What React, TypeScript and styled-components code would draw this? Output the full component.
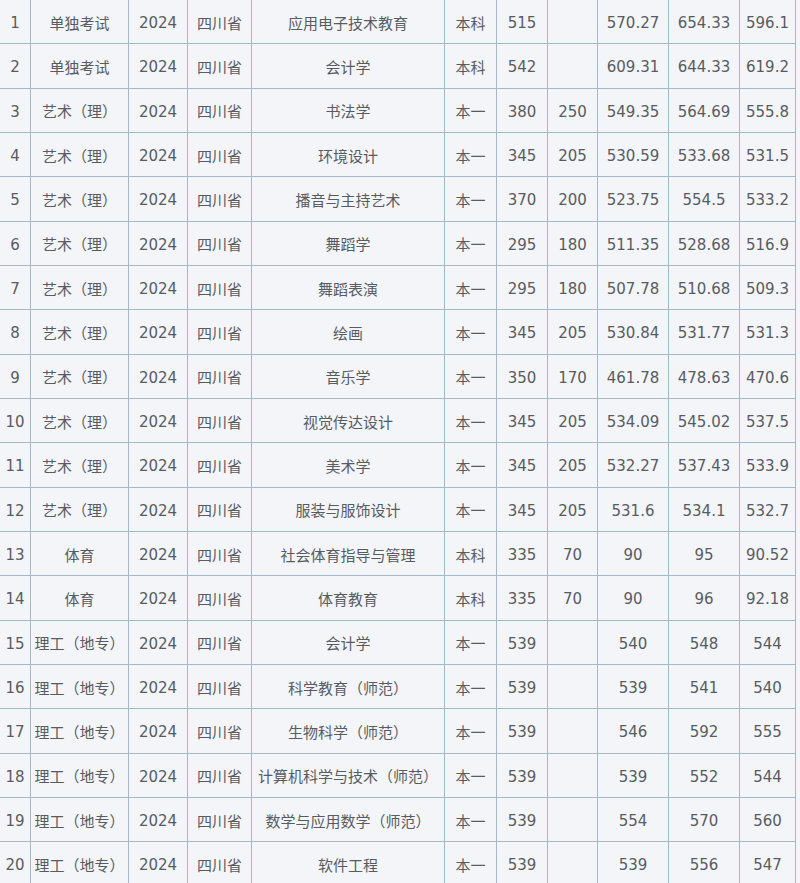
import React, { FC } from 'react';
import styled, { createGlobalStyle } from 'styled-components';

interface Row {
  category: string;
  major: string;
  level: string;
  score: string;
  extra: string;
  min: string;
  max: string;
  avg: string;
}

const rows: Row[] = [
  { category: '单独考试', major: '应用电子技术教育', level: '本科', score: '515', extra: '', min: '570.27', max: '654.33', avg: '596.1' },
  { category: '单独考试', major: '会计学', level: '本科', score: '542', extra: '', min: '609.31', max: '644.33', avg: '619.2' },
  { category: '艺术（理）', major: '书法学', level: '本一', score: '380', extra: '250', min: '549.35', max: '564.69', avg: '555.8' },
  { category: '艺术（理）', major: '环境设计', level: '本一', score: '345', extra: '205', min: '530.59', max: '533.68', avg: '531.5' },
  { category: '艺术（理）', major: '播音与主持艺术', level: '本一', score: '370', extra: '200', min: '523.75', max: '554.5', avg: '533.2' },
  { category: '艺术（理）', major: '舞蹈学', level: '本一', score: '295', extra: '180', min: '511.35', max: '528.68', avg: '516.9' },
  { category: '艺术（理）', major: '舞蹈表演', level: '本一', score: '295', extra: '180', min: '507.78', max: '510.68', avg: '509.3' },
  { category: '艺术（理）', major: '绘画', level: '本一', score: '345', extra: '205', min: '530.84', max: '531.77', avg: '531.3' },
  { category: '艺术（理）', major: '音乐学', level: '本一', score: '350', extra: '170', min: '461.78', max: '478.63', avg: '470.6' },
  { category: '艺术（理）', major: '视觉传达设计', level: '本一', score: '345', extra: '205', min: '534.09', max: '545.02', avg: '537.5' },
  { category: '艺术（理）', major: '美术学', level: '本一', score: '345', extra: '205', min: '532.27', max: '537.43', avg: '533.9' },
  { category: '艺术（理）', major: '服装与服饰设计', level: '本一', score: '345', extra: '205', min: '531.6', max: '534.1', avg: '532.7' },
  { category: '体育', major: '社会体育指导与管理', level: '本科', score: '335', extra: '70', min: '90', max: '95', avg: '90.52' },
  { category: '体育', major: '体育教育', level: '本科', score: '335', extra: '70', min: '90', max: '96', avg: '92.18' },
  { category: '理工（地专）', major: '会计学', level: '本一', score: '539', extra: '', min: '540', max: '548', avg: '544' },
  { category: '理工（地专）', major: '科学教育（师范）', level: '本一', score: '539', extra: '', min: '539', max: '541', avg: '540' },
  { category: '理工（地专）', major: '生物科学（师范）', level: '本一', score: '539', extra: '', min: '546', max: '592', avg: '555' },
  { category: '理工（地专）', major: '计算机科学与技术（师范）', level: '本一', score: '539', extra: '', min: '539', max: '552', avg: '544' },
  { category: '理工（地专）', major: '数学与应用数学（师范）', level: '本一', score: '539', extra: '', min: '554', max: '570', avg: '560' },
  { category: '理工（地专）', major: '软件工程', level: '本一', score: '539', extra: '', min: '539', max: '556', avg: '547' },
];

const widths = [31, 98, 59, 64, 193, 52, 51, 50, 71, 71, 56];

const GlobalStyle = createGlobalStyle`
  html, body {
    margin: 0;
    padding: 0;
    background: #f3f5f9;
    overflow: hidden;
  }
`;

const Page = styled.div`
  width: 800px;
  height: 883px;
  overflow: hidden;
  background: #f3f5f9;
`;

const Table = styled.table`
  border-collapse: collapse;
  table-layout: fixed;
  width: 796px;
  margin-top: -1px;
  margin-left: -1px;
  font-family: 'DejaVu Sans', 'Noto Sans CJK SC', sans-serif;
  font-size: 15px;
  color: #585c61;
`;

const Tr = styled.tr`
  height: 44.33px;
`;

const Td = styled.td<{ $tight?: boolean }>`
  border: 1px solid #a3b8c9;
  text-align: center;
  vertical-align: middle;
  padding: 3px ${(p) => (p.$tight ? 1 : 4)}px 0;
  white-space: nowrap;
  overflow: hidden;
  line-height: 20px;
`;

const Cjk = styled.span`
  font-family: 'Noto Sans CJK SC', sans-serif;
  font-size: 15px;
`;

const App: FC = (): JSX.Element => {
  return (
    <Page>
      <GlobalStyle />
      <Table>
        <colgroup>
          {widths.map((w, i) => (
            <col key={i} style={{ width: w }} />
          ))}
        </colgroup>
        <tbody>
          {rows.map((r, i) => (
            <Tr key={i}>
              <Td $tight>{i + 1}</Td>
              <Td $tight>
                <Cjk>{r.category}</Cjk>
              </Td>
              <Td>2024</Td>
              <Td>
                <Cjk>四川省</Cjk>
              </Td>
              <Td $tight>
                <Cjk>{r.major}</Cjk>
              </Td>
              <Td>
                <Cjk>{r.level}</Cjk>
              </Td>
              <Td>{r.score}</Td>
              <Td>{r.extra}</Td>
              <Td $tight>{r.min}</Td>
              <Td $tight>{r.max}</Td>
              <Td $tight>{r.avg}</Td>
            </Tr>
          ))}
        </tbody>
      </Table>
    </Page>
  );
};

export default App;
